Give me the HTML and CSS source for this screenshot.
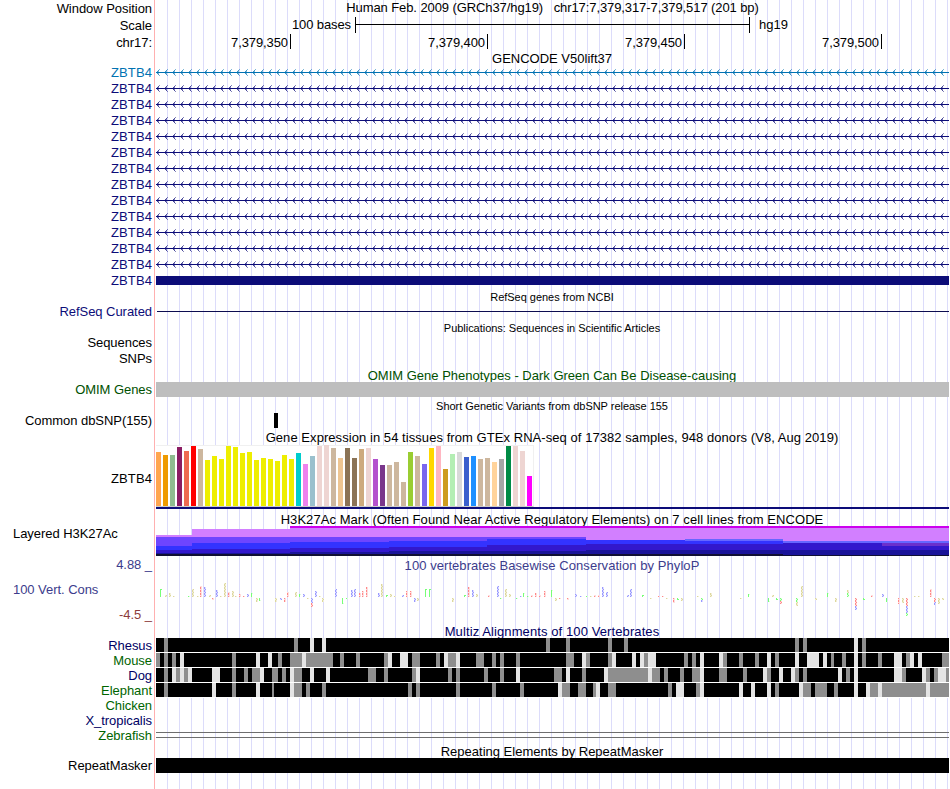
FILE: index.html
```
<!DOCTYPE html>
<html lang="en">
<head>
<meta charset="utf-8">
<title>Genome browser chr17:7,379,317-7,379,517</title>
<link rel="stylesheet" href="styles.css">
</head>
<body>
<main class="browser">
  <div class="row h17"><div class="label">Window Position</div><div class="title t-pos">Human Feb. 2009 (GRCh37/hg19) &nbsp; chr17:7,379,317-7,379,517 (201 bp)</div></div>
  <div class="row h17"><div class="label">Scale</div><div class="scale"><span class="scale-text">100 bases</span><span class="scale-bar"></span><span class="scale-db">hg19</span></div></div>
  <div class="row h16"><div class="label">chr17:</div><div class="ruler"><span>7,379,350</span><span>7,379,400</span><span>7,379,450</span><span>7,379,500</span></div></div>
  <div class="row h14"><div></div><div class="title">GENCODE V50lift37</div></div>
  <div id="genes"></div>
  <div class="row h16"><div></div><div class="title small">RefSeq genes from NCBI</div></div>
  <div class="row h15"><div class="label navy">RefSeq Curated</div><div class="refseq"></div></div>
  <div class="row h16"><div></div><div class="title small">Publications: Sequences in Scientific Articles</div></div>
  <div class="row h15"><div class="label">Sequences</div></div>
  <div class="row h16"><div class="label">SNPs</div></div>
  <div class="row h16"><div></div><div class="title green low">OMIM Gene Phenotypes - Dark Green Can Be Disease-causing</div></div>
  <div class="row h15"><div class="label green">OMIM Genes</div><div class="omim"></div></div>
  <div class="row h16"><div></div><div class="title small">Short Genetic Variants from dbSNP release 155</div></div>
  <div class="row h15"><div class="label">Common dbSNP(155)</div><div class="snp"></div></div>
  <div class="row h16"><div></div><div class="title wide low">Gene Expression in 54 tissues from GTEx RNA-seq of 17382 samples, 948 donors (V8, Aug 2019)</div></div>
  <div class="row h67"><div class="label gtex-label">ZBTB4</div><div class="gtex"><div class="bars" id="bars"></div></div></div>
  <div class="row h15"><div></div><div class="title wide">H3K27Ac Mark (Often Found Near Active Regulatory Elements) on 7 cell lines from ENCODE</div></div>
  <div class="row h30"><div class="label left">Layered H3K27Ac</div><svg id="h3k" width="793" height="30" viewBox="156 526 793 30" shape-rendering="crispEdges"></svg></div>
  <div class="row h16"><div class="label slate">4.88 _</div><div class="title slate wide low">100 vertebrates Basewise Conservation by PhyloP</div></div>
  <div class="row h51"><div class="cons-labels"><div class="label left slate">100 Vert. Cons</div><div class="label maroon">-4.5 _</div></div><svg id="cons" width="793" height="51" viewBox="156 572 793 51" shape-rendering="crispEdges"></svg></div>
  <div class="row h15"><div></div><div class="title deep wider">Multiz Alignments of 100 Vertebrates</div></div>
  <div id="multiz"></div>
  <div class="row h15"><div class="label forest">Chicken</div></div>
  <div class="row h15"><div class="label deep">X_tropicalis</div></div>
  <div class="row h15"><div class="label forest">Zebrafish</div><div class="double"></div></div>
  <div class="row h15"><div></div><div class="title">Repeating Elements by RepeatMasker</div></div>
  <div class="row h15"><div class="label">RepeatMasker</div><div class="repeat"></div></div>
</main>
<script src="tracks.js"></script>
</body>
</html>
```
FILE: styles.css
```
* { box-sizing: border-box; }
html, body { margin: 0; height: 789px; overflow: hidden; background: #fff; }
body { font-family: "Liberation Sans", Arial, sans-serif; font-size: 13px; color: #000; }
.browser {
  width: 949px; height: 789px;
  background:
    linear-gradient(#ffb0b0, #ffb0b0) 154px 0 / 1px 100% no-repeat,
    repeating-linear-gradient(to right, transparent 0 11px, #dcdcfa 11px 12px) 156px 0 / 793px 100% no-repeat;
}
.row { display: grid; grid-template-columns: 152px 793px; column-gap: 4px; }
.row > svg { display: block; }
.h14 { height: 14px; }
.h15 { height: 15px; }
.h16 { height: 16px; }
.h17 { height: 17px; }
.h30 { height: 30px; }
.h51 { height: 51px; }
.h67 { height: 67px; }
.label { text-align: right; line-height: 17px; height: 15px; white-space: pre; letter-spacing: -0.05px; }
#genes .label, .gtex-label { letter-spacing: 0.1px; }
.h15 .label, .h30 .label, .h51 .label { line-height: 15px; }
.left { text-align: left; padding-left: 13px; }
.title { text-align: center; line-height: 17px; height: 14px; padding-right: 1px; white-space: nowrap; }
.t-pos { line-height: 15px; letter-spacing: -0.09px; padding-right: 0; }
.wide { letter-spacing: 0.06px; }
.wider { letter-spacing: 0.1px; }
.low { line-height: 19px; }
.small { font-size: 11px; line-height: 18px; letter-spacing: -0.03px; }
.navy { color: #0c0c78; }
.green { color: #005000; }
.forest { color: #006400; }
.deep { color: #000064; }
.slate { color: #3c3c8c; }
.maroon { color: #8c3c3c; }

.scale { display: flex; line-height: 16px; }
.scale-text { width: 199px; padding-right: 4px; text-align: right; letter-spacing: -0.1px; }
.scale-bar {
  width: 395px; height: 16px; border: solid #000; border-width: 0 1px;
  background: linear-gradient(#000, #000) 0 7px / 100% 1px no-repeat;
}
.scale-db { padding-left: 9px; }
.ruler { display: flex; letter-spacing: -0.1px; }
.ruler span { width: 197px; height: 15px; line-height: 17px; padding-right: 2px; border-right: 1px solid #000; text-align: right; }
.ruler span:first-child { width: 135px; }

.gene { display: block; }
.exon { height: 9px; margin-top: 4px; background: #0c0c78; }
.refseq { height: 1px; margin: 7px 0 0 1px; background: #0c0c50; }
.omim { background: #bebebe; }
.snp { width: 4px; margin-left: 118px; background: #000; }
.gtex { padding-top: 1px; }
.gtex::after { content: ""; display: block; height: 2px; background: #0c0c78; }
.gtex-label { padding-top: 26px; }
.bars {
  display: flex; align-items: flex-end; gap: 2px; width: 378px; height: 62px;
  background: #fff; border: solid #f0f0f0; border-width: 1px 1px 0 0; border-bottom: 1px solid #ccc;
}
.bars i { width: 5px; flex: none; }
.cons-labels { display: flex; flex-direction: column; gap: 10px; padding-top: 10px; }
.double { height: 6px; margin-top: 4px; border: solid #6e6e6e; border-width: 1px 0; }
.repeat { background: #000; }
```
FILE: tracks.js
```
const NS = "http://www.w3.org/2000/svg";

function rect(svg, x, y, w, h, fill) {
  const r = document.createElementNS(NS, "rect");
  for (const [k, v] of Object.entries({ x, y, width: w, height: h, fill })) r.setAttribute(k, v);
  svg.appendChild(r);
}

/* Gene models: introns with strand arrows every 8px, then one solid exon */
const genes = document.getElementById("genes");
for (let g = 0; g < 14; g++) {
  const color = g === 0 ? "#0072b2" : "#0c0c78";
  const row = document.createElement("div");
  row.className = "row h16";
  let body = '<div class="exon"></div>';
  if (g < 13) {
    let arms = "", ends = "";
    for (let x = 1; x < 793; x += 8) {
      arms += `M${x} 7h1v1h-1zM${x} 9h1v1h-1zM${x + 1} 6h1v1h-1zM${x + 1} 10h1v1h-1z`;
      ends += `M${x + 1} 7h1v1h-1zM${x + 1} 9h1v1h-1zM${x + 2} 5h1v1h-1zM${x + 2} 11h1v1h-1z`;
    }
    body = `<svg class="gene" width="793" height="16" fill="${color}" shape-rendering="crispEdges"><path d="M0 8H793V9H0z"/><path opacity=".75" d="${arms}"/><path opacity=".5" d="${ends}"/></svg>`;
  }
  row.innerHTML = `<div class="label" style="color:${color}">ZBTB4</div>${body}`;
  genes.appendChild(row);
}

/* GTEx expression: height, colour */
const Y = "#eeee00", T = "#cdb79e", P = "#eed5d2";
const tissues = [
  [54, "#ffa54f"], [51, "#ee9a00"], [51, "#8fbc8f"], [59, "#8b1c62"], [55, "#ee6a50"], [60, "#ff0000"], [57, T],
  [46, Y], [50, Y], [47, Y], [60, Y], [59, Y], [53, Y], [54, Y], [46, Y], [48, Y], [47, Y], [45, Y], [51, Y], [47, Y],
  [53, "#00cdcd"], [42, "#ee82ee"], [50, "#9ac0cd"], [60, P], [61, P], [58, T], [48, "#eec591"], [58, "#8b7355"],
  [48, "#8b7355"], [57, "#cdaa7d"], [58, P], [47, "#b452cd"], [41, "#7a378b"], [41, T], [44, T], [24, T],
  [54, "#9acd32"], [50, T], [42, "#7a67ee"], [58, "#ffd700"], [60, "#ffb6c1"], [37, "#cd9b1d"], [52, "#b4eeb4"],
  [54, "#d9d9d9"], [49, "#3a5fcd"], [50, "#1e90ff"], [47, T], [48, T], [44, "#ffd39b"], [47, "#a6a6a6"],
  [60, "#008b45"], [60, P], [55, P], [30, "#ff00ff"]
];
document.getElementById("bars").innerHTML =
  tissues.map(([h, c]) => `<i style="height:${h}px;background:${c}"></i>`).join("");

/* H3K27Ac overlay: each layer is a list of [start x, top y] */
const layers = [
  ["#cc00ee", [[290, 526]]],
  ["#d27fff", [[156, 535], [192, 529], [290, 528]]],
  ["#6e45ff", [[156, 537], [586, 556]]],
  ["#6666ff", [[685, 539], [783, 541]]],
  ["#6b30cc", [[882, 543]]],
  ["#3333ff", [[156, 546], [192, 543], [290, 542], [389, 541], [487, 539], [586, 540], [685, 541], [783, 543], [882, 546]]],
  ["#3318cc", [[156, 550], [192, 549], [290, 548], [389, 547], [487, 545], [586, 544], [783, 543], [882, 546]]],
  ["#1a1499", [[156, 553], [290, 552], [389, 551], [586, 550]]],
  ["#101033", [[156, 554], [586, 554], [783, 555]]]
];
const h3k = document.getElementById("h3k");
for (const [color, steps] of layers)
  steps.forEach(([x, y], i) => rect(h3k, x, y, (steps[i + 1] ? steps[i + 1][0] : 949) - x, 556 - y, color));

/* PhyloP: x, signed height from the zero line, base colours */
const phylop = `160 8 g,165 2 y,169 4 y,173 1 y,188 1 g,192 8 y,197 1 y,200 11 r,204 10 b,209 2 y,212 -2 r,216 7 b,220 1 y,224 14 y,228 5 r,232 6 y,235 1 y,239 3 r,243 1 r,247 3 b,251 4 g,256 -4 y,259 -3 g,275 -4 y,280 -2 b,284 -4 r,287 5 r,295 5 y,299 3 g,303 3 b,307 -1 y,311 -9 br,315 6 b,319 1 y,322 -4 y,335 8 b,342 -6 g,346 -1 g,351 7 b,354 8 b,359 4 r,362 6 r,366 10 r,378 4 b,381 13 y,386 2 g,390 3 y,394 1 y,402 2 b,406 6 r,410 6 r,414 -4 b,417 -3 y,425 8 g,429 8 g,452 -4 y,464 2 g,468 10 r,472 7 b,476 3 y,488 2 r,497 11 b,500 -1 g,505 8 y,509 3 y,516 -1 g,520 1 b,523 4 g,527 1 g,531 2 r,535 4 r,539 2 r,544 6 r,551 7 g,555 -3 y,559 -1 r,567 -2 r,575 3 b,580 1 b,586 1 g,590 1 y,594 2 r,598 2 r,602 10 b,606 5 b,627 2 b,630 8 b,642 2 g,650 -1 y,658 1 r,662 1 r,666 -1 y,673 -5 r,677 -2 g,681 -3 y,697 1 y,701 -4 gb,710 4 y,740 -1 y,748 3 g,768 -4 g,772 2 y,776 -2 g,780 -6 gr,796 -8 gy,801 11 y,815 -2 y,827 4 g,835 -4 y,847 7 gy,855 -12 rrb,863 -2 g,871 2 r,882 3 b,886 -4 g,898 -6 r,902 -5 y,906 -18 rrbbg,914 1 y,918 1 y,930 8 r,934 -7 rb,938 -6 y,942 -2 y`;
const bases = { g: ["#7f7", "#dfd"], y: ["#ddd89c", "#f2efd8"], r: ["#f88", "#fdd"], b: ["#99f", "#ddf"] };
const cons = document.getElementById("cons");
for (const item of phylop.split(",")) {
  const [x, h, c] = item.split(" ");
  const n = Math.abs(h);
  for (let i = 0; i < n; i++) {
    const pair = bases[c[Math.floor(i * c.length / n)]];
    const y = h > 0 ? 596 - i : 598 + i;
    rect(cons, +x, y, 1, 1, pair[i % 3 === 1 && c !== "g" ? 1 : 0]);
    if (c !== "g" || i === n - 1) rect(cons, +x + 1, y, 1, 1, pair[i % 3 === 1 && c !== "r" ? 0 : 1]);
  }
}

/* Multiz: black rows; g = weaker match, w = mismatch; width defaults to 4px */
const species = [
  ["Rhesus", "deep", "164g 294g 310w 322w 546g 566g 608g 624g 795g 803g 854w 862g"],
  ["Mouse", "forest", "156g 164g 172g 180w 232g 256w 268w 278g 290g12 302w 306g27 340g 356g 384g 388w 400w8 412g8 436g 444w 448g8 456w 476g8 492g 500g 516g 566g8 582w 586g 608g 612w 632w 640w 644g 648w8 684g 692g 700w 719w 723g 739g 755g 767w 775g 795w 807w12 823w 831g3 842g 854w 862g 878g 894w8 906g 910w 918w 942g7"],
  ["Dog", "deep", "164g 172w 176g 180w 184g 188w 212w8 232g 244g 252g8 260w 272g6 282g 290w 294g8 310w 326w 368g8 384g 412g 416w 448g 456g 484g 500g 516w 554g8 566w 582g 604w 608g40 648w 652g8 664g 680g 692g8 700w 719g8 743g 763w 767g 779w 791w 795g 803g 838w 846g 854w 894w8 902g 922w 926g 934g 938w8 946g3"],
  ["Elephant", "forest", "164g 212w 232g 256w 272g2 290w 294g8 306g 322g 408g 416g 456g 492g 520g 558w 562g8 578g8 593g3 596w 608g8 668g 676w8 696g 700w 739w 751w 767w 775g 799w 803g8 815g12 834g 854w 866w 870g8 878w 882g44 926w 930g19"]
];
const multiz = document.getElementById("multiz");
for (const [name, cls, cells] of species) {
  const row = document.createElement("div");
  row.className = "row h15";
  row.innerHTML = `<div class="label ${cls}">${name}</div><svg width="793" height="15" viewBox="156 0 793 15" shape-rendering="crispEdges"></svg>`;
  const svg = row.querySelector("svg");
  rect(svg, 156, 0, 793, 15, "#fff");
  rect(svg, 156, 0, 793, 14, "#000");
  for (const cell of cells.split(" ")) {
    const [, x, k, w] = cell.match(/(\d+)([gw])(\d*)/);
    rect(svg, +x, 0, +(w || 4), 14, k === "g" ? "#8e8e8e" : "#e4e4e4");
  }
  multiz.appendChild(row);
}
```
